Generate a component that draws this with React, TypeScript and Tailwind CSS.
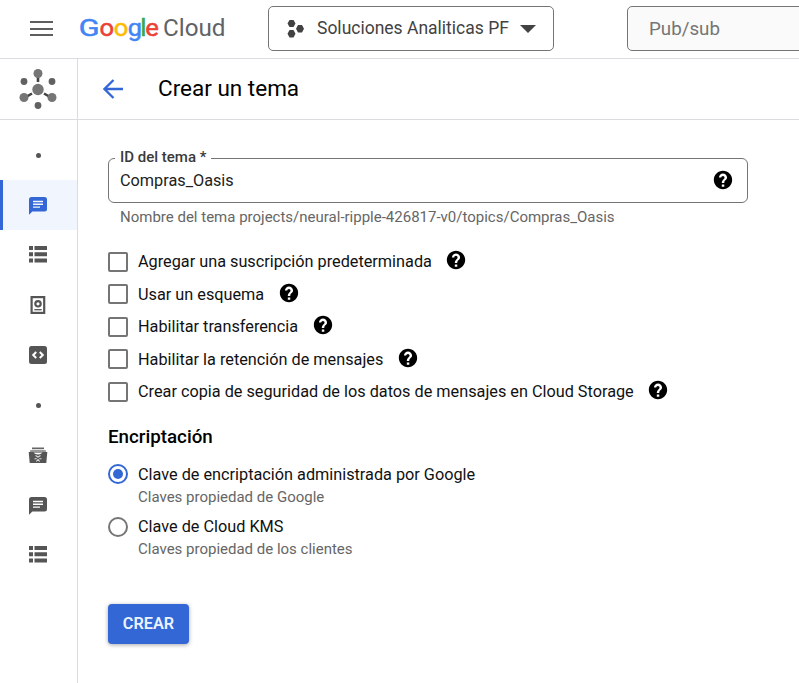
import type { ReactNode } from "react";

type IconProps = { className?: string };

const HelpIcon = ({ className = "" }: IconProps) => (
  <svg viewBox="0 0 24 24" className={`size-[22px] shrink-0 fill-black ${className}`}>
    <path d="M12 2C6.480 2 2 6.480 2 12s4.480 10 10 10 10-4.480 10-10S17.520 2 12 2zm1.400 17.300h-2.700v-2.500h2.700v2.500zm2.100-7.900l-.9.920c-.8.8-1.200 1.480-1.200 2.980h-2.700v-.5c0-1.100.45-2.100 1.170-2.830l1.240-1.260c.37-.36.59-.86.59-1.410 0-1-.75-1.800-1.750-1.800s-1.850.8-1.850 1.800H7.600C7.600 6.800 9.600 4.900 12 4.900s4.400 1.900 4.400 4.300c0 .88-.36 1.680-.9 2.200z" />
  </svg>
);

const ChatIcon = () => (
  <svg viewBox="0 0 18 18" className="mt-[2px] size-[18px] fill-current">
    <path fillRule="evenodd" d="M2.500 0h13A2.500 2.500 0 0 1 18 2.500v9.500a2.500 2.500 0 0 1-2.500 2.500H3.400L0 17.800V2.500A2.500 2.500 0 0 1 2.500 0zM4 3.800v1.400h10V3.800zM4 6.600V8h10V6.600zM4 9.400v1.400h7V9.400z" />
  </svg>
);

const ListIcon = () => (
  <svg viewBox="0 0 18 18" className="mb-[2px] size-[18px] fill-current">
    <path d="M0 1h4v4H0zM5.500 1H18v4H5.500zM0 7.200h4v4H0zM5.500 7.200H18v4H5.500zM0 13.400h4v4H0zM5.500 13.400H18v4H5.500z" />
  </svg>
);

const SnapshotIcon = () => (
  <svg viewBox="0 0 18 18" className="size-[18px]" fill="none" stroke="currentColor">
    <rect x="2.600" y="1.100" width="12.600" height="15.800" strokeWidth="2.200" />
    <circle cx="9" cy="7.800" r="2.700" strokeWidth="2.200" />
    <path d="M5.300 13.700h7.400" strokeWidth="1.300" />
  </svg>
);

const CodeIcon = () => (
  <svg viewBox="0 0 18 18" className="size-[18px]">
    <rect width="18" height="18" rx="2.500" fill="currentColor" />
    <path d="M7.200 6L4.200 9l3 3M10.800 6l3 3-3 3" fill="none" stroke="white" strokeWidth="2" />
  </svg>
);

const ArchiveIcon = () => (
  <svg viewBox="0 0 20 18" className="h-[18px] w-5">
    <path d="M4 1.500h12v1.700H4z" fill="#666" />
    <path d="M2.300 4h15.400l.6 3H1.700z" fill="#999" />
    <path d="M.7 6h4.800c.5 1.600 2 2.400 4.500 2.400s4-.8 4.500-2.400h4.800l-1 11H1.700z" fill="currentColor" />
    <path d="M7.500 9.500l2.500 1.500 2.500-1.500M6.500 12.700h2.300M11.200 12.700h2.300M8.300 15.500l1.700-2 1.700 2" stroke="#ddd" strokeWidth="1.100" fill="none" />
  </svg>
);

const Dot = () => <span className="size-[5px] rounded-full bg-[#555]" />;

const PubSubIcon = () => (
  <svg viewBox="0 0 38 42" className="h-[42px] w-[38px]">
    <path d="M19 7v7M7 29l6-3.500M31 29l-6-3.500" stroke="#424242" strokeWidth="2.600" />
    <g fill="#757575">
      <circle cx="19" cy="5.500" r="4.500" />
      <circle cx="5" cy="29.500" r="4.500" />
      <circle cx="33" cy="29.500" r="4.500" />
      <circle cx="19" cy="21.500" r="5.700" />
    </g>
    <g fill="#616161">
      <circle cx="5" cy="13.500" r="3.400" />
      <circle cx="33" cy="13.500" r="3.400" />
      <circle cx="19" cy="37.500" r="3.400" />
    </g>
  </svg>
);

const logoLetters = [
  { char: "G", x: -1.2, width: 20.8, color: "#4285f4" },
  { char: "o", x: 19.6, width: 14.6, color: "#ea4335" },
  { char: "o", x: 33.7, width: 14.6, color: "#fbbc04" },
  { char: "g", x: 47.8, width: 14.2, color: "#4285f4" },
  { char: "l", x: 60.3, width: 6.2, color: "#34a853" },
  { char: "e", x: 65.3, width: 13.6, color: "#ea4335" },
];

const Logo = () => (
  <svg viewBox="0 0 146 34" className="ml-[27px] h-[34px] w-[146px] shrink-0 overflow-visible" fontFamily="Roboto, 'Liberation Sans', sans-serif">
    {logoLetters.map(({ char, x, width, color }, i) => (
      <text key={i} x={x} y="24" fontSize="24" textLength={width} lengthAdjust="spacingAndGlyphs" fill={color} stroke={color} strokeWidth=".5">
        {char}
      </text>
    ))}
    <text x="83" y="24" fontSize="24" fill="#5f6368" textLength="62.500" lengthAdjust="spacingAndGlyphs">Cloud</text>
  </svg>
);

function NavItem({ active = false, children }: { active?: boolean; children: ReactNode }) {
  return (
    <a
      className={
        active
          ? "flex h-[50px] items-center justify-center border-l-[3px] border-[#3367d6] bg-[#f0f5fe] pr-1 text-[#3367d6]"
          : "flex h-[50px] items-center justify-center pr-px text-[#555]"
      }
    >
      {children}
    </a>
  );
}

const options = [
  { label: "Agregar una suscripción predeterminada", width: "w-[294px]" },
  { label: "Usar un esquema", width: "w-[127px]" },
  { label: "Habilitar transferencia", width: "w-[161px]" },
  { label: "Habilitar la retención de mensajes", width: "w-[246px]" },
  { label: "Crear copia de seguridad de los datos de mensajes en Cloud Storage", width: "w-[496px]" },
];

function Radio({ checked = false, label, hint }: { checked?: boolean; label: string; hint: string }) {
  return (
    <label className="flex h-[52px] gap-[10px]">
      <span
        className={
          checked
            ? "flex size-5 shrink-0 items-center justify-center rounded-full border-2 border-[#3367d6]"
            : "mt-px size-5 shrink-0 rounded-full border-2 border-[#757575]"
        }
      >
        {checked && <span className="size-[10px] rounded-full bg-[#3367d6]" />}
      </span>
      <span className="flex flex-col whitespace-nowrap">
        <span className="text-[16.25px] leading-[22px] text-[#111]">{label}</span>
        <span className="text-[15px] leading-[22px] text-[#666]">{hint}</span>
      </span>
    </label>
  );
}

export default function App() {
  return (
    <div className="flex h-[683px] w-[799px] flex-col overflow-hidden bg-white font-['Roboto','Liberation_Sans',sans-serif]">
      <header className="flex h-[59px] shrink-0 items-center border-b border-[#dadce0]">
        <svg viewBox="0 0 23 16" className="ml-[30px] h-4 w-[23px] shrink-0" stroke="#5f5f5f" strokeWidth="2">
          <path d="M0 1h23M0 8h23M0 14h23" />
        </svg>
        <Logo />
        <button className="ml-[42px] mb-px flex h-[45px] w-[286px] shrink-0 items-center rounded-[5px] border border-[#757575] pl-[18px] text-[#424242]">
          <svg viewBox="0 0 18 20" className="h-5 w-[18px] shrink-0 fill-[#424242]">
            <path d="M2.500 1h4l2 3.500-2 3.500h-4l-2-3.500zM11 6h4l2 3.700-2 3.700h-4L9 9.700zM2.500 11h4l2 3.700-2 3.700h-4l-2-3.700z" />
          </svg>
          <span className="ml-3 w-[191px] whitespace-nowrap text-left text-[17.500px]">Soluciones Analiticas PF</span>
          <svg viewBox="0 0 16 8" className="ml-3 h-2 w-4 shrink-0 fill-[#424242]"><path d="M0 0h16L8 8z" /></svg>
        </button>
        <div className="mb-px ml-[73px] flex h-[45px] w-[200px] shrink-0 items-center rounded-[5px] border border-[#757575] bg-[#fafafa] pl-[21px] pt-[2px] text-[18.750px] text-[#757575]">
          Pub/sub
        </div>
      </header>

      <div className="flex min-h-0 flex-1">
        <aside className="flex w-[78px] shrink-0 flex-col border-r border-[#dadce0]">
          <div className="flex h-[61px] shrink-0 items-center justify-center border-b border-[#dadce0] pr-px"><PubSubIcon /></div>
          <nav className="pt-[10px]">
            <NavItem><Dot /></NavItem>
            <NavItem active><ChatIcon /></NavItem>
            <NavItem><ListIcon /></NavItem>
            <NavItem><SnapshotIcon /></NavItem>
            <NavItem><CodeIcon /></NavItem>
            <NavItem><Dot /></NavItem>
            <NavItem><ArchiveIcon /></NavItem>
            <NavItem><ChatIcon /></NavItem>
            <NavItem><ListIcon /></NavItem>
          </nav>
        </aside>

        <main className="flex min-w-0 flex-1 flex-col">
          <div className="flex h-[61px] shrink-0 items-center border-b border-[#dadce0]">
            <svg viewBox="0 0 20 20" className="ml-[25px] size-5" fill="none" stroke="#3367d6" strokeWidth="2.300">
              <path d="M20 10H2M10.500 1L1.500 10l9 9" />
            </svg>
            <h1 className="mb-[2px] ml-[35px] text-[22.500px] leading-[30px] text-black">Crear un tema</h1>
          </div>

          <form className="flex flex-col pl-[30px] pt-[38px]">
            <div className="relative flex h-[45px] w-[640px] items-center rounded-[6px] border border-[#757575] pl-[11px] pr-[13px]">
              <span className="absolute left-[6px] top-[-12px] bg-white px-[5px] text-[15px] font-medium leading-5 text-[#3a3a3a]">
                ID del tema *
              </span>
              <span className="flex-1 pt-[2px] text-[16.250px] text-[#212121]">Compras_Oasis</span>
              <HelpIcon className="mb-px" />
            </div>
            <p className="mt-1 pl-3 text-[15px] leading-5 whitespace-nowrap text-[#666]">
              Nombre del tema projects/neural-ripple-426817-v0/topics/Compras_Oasis
            </p>

            <div className="mt-[18.500px] flex flex-col">
              {options.map(({ label, width }) => (
                <label key={label} className="flex h-[32.500px] items-center">
                  <span className="size-5 shrink-0 rounded-[2px] border-2 border-[#757575]" />
                  <span className={`ml-[10px] shrink-0 whitespace-nowrap pt-px text-[16.250px] text-[#111] ${width}`}>{label}</span>
                  <HelpIcon className="mb-[3px] ml-[13px]" />
                </label>
              ))}
            </div>

            <h2 className="mt-[17px] text-[18.750px] leading-6 font-medium text-black">Encriptación</h2>
            <div className="mt-[15px] flex flex-col">
              <Radio checked label="Clave de encriptación administrada por Google" hint="Claves propiedad de Google" />
              <Radio label="Clave de Cloud KMS" hint="Claves propiedad de los clientes" />
            </div>

            <button className="mt-9 h-10 w-[81px] rounded-[4px] bg-[#3367d6] text-[16.250px] font-semibold text-[#eaf3ff] shadow-[0_1px_4px_rgba(0,0,0,0.35)]">
              CREAR
            </button>
          </form>
        </main>
      </div>
    </div>
  );
}
